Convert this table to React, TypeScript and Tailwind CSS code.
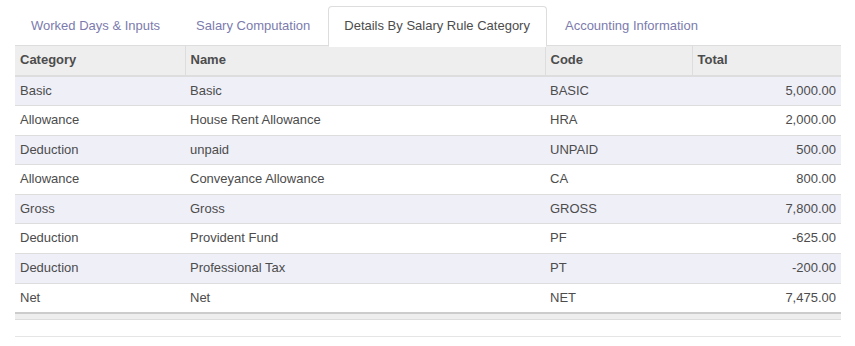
import React from 'react';

const tabs = ['Worked Days & Inputs', 'Salary Computation', 'Details By Salary Rule Category', 'Accounting Information'];
const activeTab = 2;

const rows = [
  ['Basic', 'Basic', 'BASIC', '5,000.00'],
  ['Allowance', 'House Rent Allowance', 'HRA', '2,000.00'],
  ['Deduction', 'unpaid', 'UNPAID', '500.00'],
  ['Allowance', 'Conveyance Allowance', 'CA', '800.00'],
  ['Gross', 'Gross', 'GROSS', '7,800.00'],
  ['Deduction', 'Provident Fund', 'PF', '-625.00'],
  ['Deduction', 'Professional Tax', 'PT', '-200.00'],
  ['Net', 'Net', 'NET', '7,475.00'],
];

// tab paddings nudged so the tab edges land where the reference has them
const tabPad = ['pl-[15px] pr-[17px]', 'px-[15px]', 'pl-[15px] pr-[16px]', 'px-[15px]'];

export default function App() {
  return (
    <div className="w-[855px] h-[346px] bg-white pt-[6px] pl-[15px] pr-[14px] text-[13px] leading-[18.57px] text-[#4c4c4c] font-['Liberation_Sans',Arial,sans-serif]">
      <ul className="flex border-b border-[#ddd] h-[40px]">
        {tabs.map((t, i) =>
          i === activeTab ? (
            <li key={t} className="mr-[2px] -mb-px">
              <span className={`block ${tabPad[i]} py-[10px] bg-white border border-[#ddd] border-b-transparent rounded-t-[4px] text-[#4c4c4c]`}>{t}</span>
            </li>
          ) : (
            <li key={t} className="mr-[2px] -mb-px">
              <span className={`block ${tabPad[i]} py-[10px] border border-transparent text-[#7c7bad]`}>{t}</span>
            </li>
          )
        )}
      </ul>
      <table className="w-[826px] border-collapse table-fixed">
        <colgroup>
          <col className="w-[170px]" />
          <col className="w-[360px]" />
          <col className="w-[147px]" />
          <col className="w-[149px]" />
        </colgroup>
        <thead>
          <tr className="bg-[#eee]">
            <th className="text-left font-bold px-[5px] py-[5px] border-b-2 border-[#ddd]">Category</th>
            <th className="text-left font-bold px-[5px] py-[5px] border-b-2 border-l border-[#ddd]">Name</th>
            <th className="text-left font-bold px-[5px] py-[5px] border-b-2 border-l border-[#ddd]">Code</th>
            <th className="text-left font-bold px-[5px] py-[5px] border-b-2 border-l border-[#ddd]">Total</th>
          </tr>
        </thead>
        <tbody>
          {rows.map((r, i) => (
            <tr key={i} className={i % 2 === 0 ? 'bg-[#efeff8] border-t border-[#ddd]' : 'bg-white border-t border-[#ddd]'}>
              <td className="px-[5px] py-[5px]">{r[0]}</td>
              <td className="px-[5px] py-[5px]">{r[1]}</td>
              <td className="px-[5px] py-[5px]">{r[2]}</td>
              <td className="px-[5px] py-[5px] text-right">{r[3]}</td>
            </tr>
          ))}
        </tbody>
        <tfoot>
          <tr className="bg-[#eee] border-t-2 border-[#ccc] border-b border-b-[#ddd]">
            <td colSpan={4} className="h-[6px] p-0"></td>
          </tr>
        </tfoot>
      </table>
      <div className="mt-[16px] w-[826px] border-t border-[#e5e5e5]"></div>
    </div>
  );
}
